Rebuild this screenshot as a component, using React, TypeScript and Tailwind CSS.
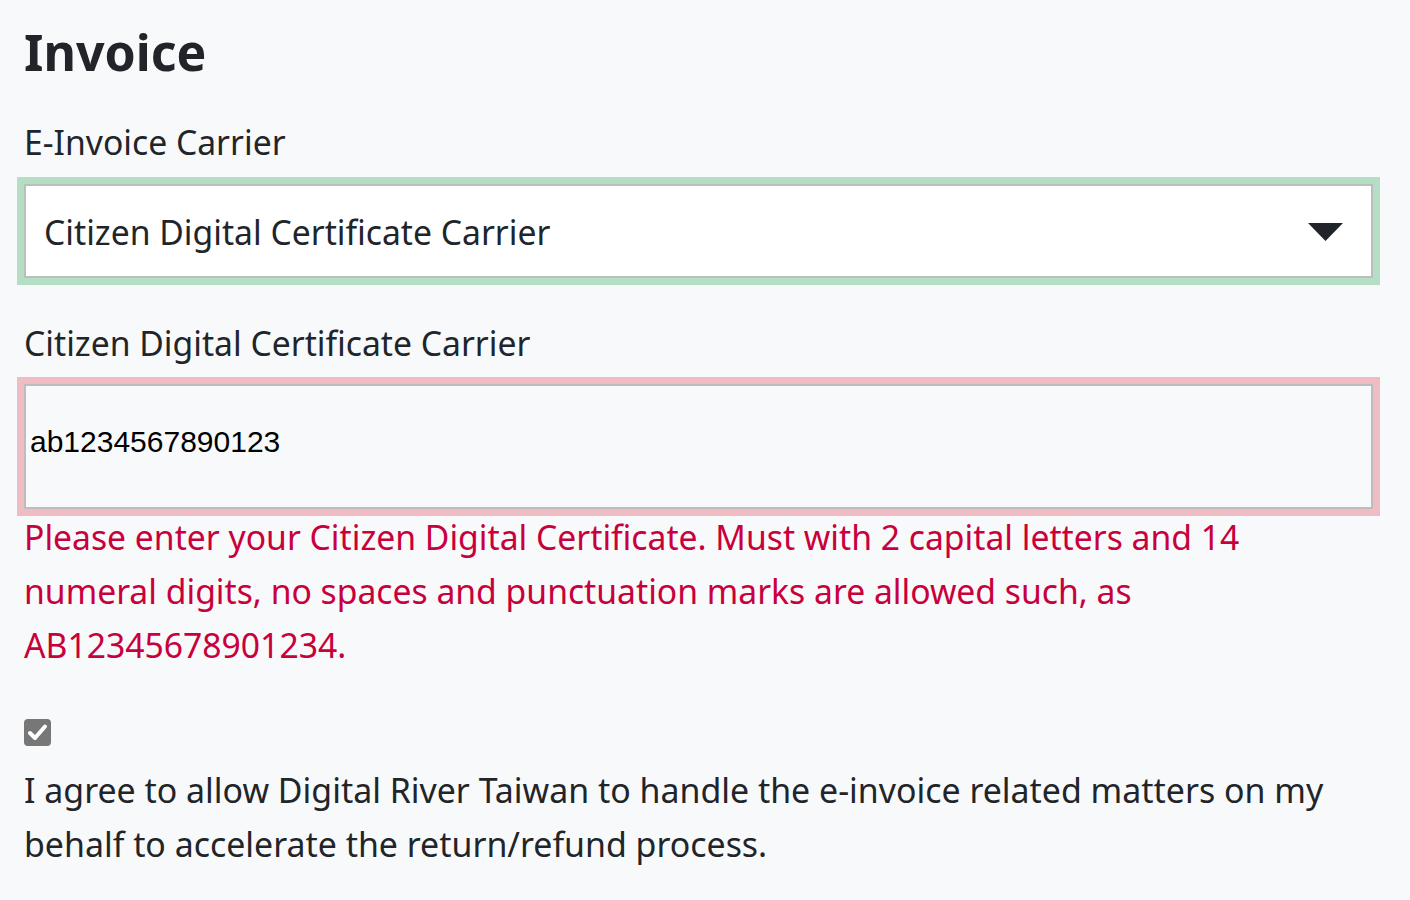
import React from "react"

const font = { fontFamily: '"Noto Sans", "Open Sans", sans-serif' }

const App: React.FC = (): JSX.Element => {
  return (
    <div className="min-h-[900px] w-[1410px] bg-[#f8f9fa] text-[#212529]" style={font}>
      <div className="pl-[24px] pr-[37px] pt-[22px]">
        <h2 className="text-[50px] font-bold leading-[60px]">Invoice</h2>

        <label className="mt-[36px] block text-[33.7px] leading-[48px]">E-Invoice Carrier</label>
        <div className="relative mt-[18px] flex h-[94px] items-center border-2 border-[#bdbdbd] bg-white pt-[3px] shadow-[0_0_0_7px_#b5dfc4]">
          <span className="pl-[18px] text-[33.7px]">Citizen Digital Certificate Carrier</span>
          <svg className="absolute right-[28px] top-[37px]" width="35" height="18" viewBox="0 0 35 18">
            <polygon points="0,0 35,0 17.5,18" fill="#212529" />
          </svg>
        </div>

        <label className="mt-[41px] block text-[33.7px] leading-[48px]">Citizen Digital Certificate Carrier</label>
        <div className="mt-[17px] flex h-[125px] items-center border-2 border-[#bdbdbd] bg-[#f8f9fa] pb-[10px] shadow-[0_0_0_7px_#efbcc3]">
          <span className="pl-[4px] text-[30px] text-black" style={{ fontFamily: '"Liberation Sans", Arial, sans-serif' }}>
            ab1234567890123
          </span>
        </div>
        <p className="mt-[1px] text-[33.7px] leading-[54px] text-[#c8003c]">
          Please enter your Citizen Digital Certificate. Must with 2 capital letters and 14 numeral digits, no spaces
          and punctuation marks are allowed such, as AB12345678901234.
        </p>

        <div className="mt-[47px] flex h-[27px] w-[27px] items-center justify-center rounded-[4px] bg-[#777777]">
          <svg width="21" height="19" viewBox="0 0 21 19">
            <path d="M3 10 L8 15 L18 3.5" fill="none" stroke="white" strokeWidth="4" strokeLinecap="round" strokeLinejoin="round" />
          </svg>
        </div>
        <p className="mt-[17px] text-[33.9px] leading-[54px]">
          I agree to allow Digital River Taiwan to handle the e-invoice related matters on my behalf to accelerate the
          return/refund process.
        </p>
      </div>
    </div>
  )
}

export default App
